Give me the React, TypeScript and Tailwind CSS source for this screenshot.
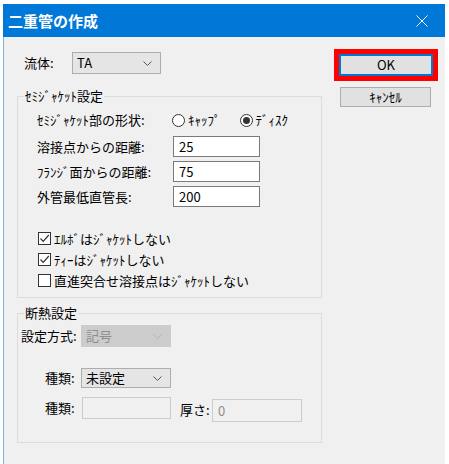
import React from 'react';

const font = { fontFamily: '"Noto Sans CJK JP", "Noto Sans", sans-serif' };

function Chevron({ disabled }: { disabled?: boolean }) {
  return (
    <svg width="9" height="5" viewBox="0 0 9 5" className="shrink-0">
      <path d="M0.5 0.5 L4.5 4.5 L8.5 0.5" fill="none" stroke={disabled ? '#b5b5b5' : '#555'} strokeWidth="1" />
    </svg>
  );
}

function Select({ value, w, h, disabled }: { value: string; w: string; h: string; disabled?: boolean }) {
  return (
    <div
      className={`${w} ${h} flex items-center justify-between pl-[4px] pr-[8px] border ${
        disabled ? 'border-[#cccccc] bg-[#cccccc] text-[#8e8e8e]' : 'border-[#adadad] bg-[#e5e5e5] text-black'
      }`}
    >
      <span>{value}</span>
      <Chevron disabled={disabled} />
    </div>
  );
}

function TextBox({ value, w, h, disabled }: { value: string; w: string; h: string; disabled?: boolean }) {
  return (
    <div
      className={`${w} ${h} flex items-center pl-[5px] border ${
        disabled ? 'border-[#cccccc] bg-[#f0f0f0] text-[#8e8e8e]' : 'border-[#7a7a7a] bg-white text-black'
      }`}
    >
      {value}
    </div>
  );
}

function Radio({ label, checked }: { label: string; checked?: boolean }) {
  return (
    <div className="flex items-center gap-[3px]">
      <span className="w-[13px] h-[13px] rounded-full border border-[#333] bg-white flex items-center justify-center">
        {checked && <span className="w-[7px] h-[7px] rounded-full bg-[#333]" />}
      </span>
      <span>{label}</span>
    </div>
  );
}

function Check({ label, checked }: { label: string; checked?: boolean }) {
  return (
    <div className="h-[21px] flex items-center pl-[20px] gap-[3px]">
      <span className="w-[13px] h-[13px] border border-[#333] bg-white flex items-center justify-center">
        {checked && (
          <svg width="11" height="11" viewBox="0 0 11 11">
            <path d="M1.5 5.5 L4.2 8.3 L9.8 2" fill="none" stroke="#333" strokeWidth="1.2" />
          </svg>
        )}
      </span>
      <span>{label}</span>
    </div>
  );
}

function Group({ title, h, children }: { title: string; h: string; children: React.ReactNode }) {
  return (
    <div className={`${h} border border-[#dcdcdc]`}>
      <div className="-mt-[9px] ml-[6px] px-[1px] w-fit bg-[#f0f0f0] leading-[16px]">{title}</div>
      {children}
    </div>
  );
}

export default function App() {
  return (
    <div className="min-h-screen bg-white text-[13px] leading-[16px] text-black" style={font}>
      <div className="ml-[3px] pt-[4px] w-[442px]">
        {/* title bar */}
        <div className="h-[33px] bg-[#0078d7] flex items-center justify-between pl-[5px] pr-[17px] text-white">
          <span className="text-[15px] font-bold">二重管の作成</span>
          <svg width="12" height="12" viewBox="0 0 12 12">
            <path d="M0.5 0.5 L11.5 11.5 M11.5 0.5 L0.5 11.5" stroke="#fff" strokeWidth="1" />
          </svg>
        </div>

        <div className="h-[427px] bg-[#f0f0f0] border-l border-[#7eb4ea] pl-[13px] flex">
          <div className="w-[305px]">
            <div className="mt-[15px] h-[22px] flex items-center pl-[7px]">
              <span className="w-[48px]">流体:</span>
              <Select value="TA" w="w-[89px]" h="h-[22px]" />
            </div>

            <div className="mt-[22px]">
              <Group title="ｾﾐｼﾞｬｹｯﾄ設定" h="h-[202px]">
                <div className="mt-[8px] flex items-center pl-[19px]">
                  <span className="w-[135px]">ｾﾐｼﾞｬｹｯﾄ部の形状:</span>
                  <div className="flex gap-[19px]">
                    <Radio label="ｷｬｯﾌﾟ" />
                    <Radio label="ﾃﾞｨｽｸ" checked />
                  </div>
                </div>
                <div className="mt-[8px] flex flex-col gap-[4px] pl-[19px]">
                  {[
                    ['溶接点からの距離:', '25'],
                    ['ﾌﾗﾝｼﾞ面からの距離:', '75'],
                    ['外管最低直管長:', '200'],
                  ].map(([label, value]) => (
                    <div key={label} className="flex items-center">
                      <span className="w-[136px]">{label}</span>
                      <TextBox value={value} w="w-[87px]" h="h-[21px]" />
                    </div>
                  ))}
                </div>
                <div className="mt-[21px]">
                  <Check label="ｴﾙﾎﾞはｼﾞｬｹｯﾄしない" checked />
                  <Check label="ﾃｨｰはｼﾞｬｹｯﾄしない" checked />
                  <Check label="直進突合せ溶接点はｼﾞｬｹｯﾄしない" />
                </div>
              </Group>
            </div>

            <div className="mt-[15px]">
              <Group title="断熱設定" h="h-[130px]">
                <div className="mt-[4px] flex items-center pl-[3px]">
                  <span className="w-[60px]">設定方式:</span>
                  <Select value="記号" w="w-[90px]" h="h-[22px]" disabled />
                </div>
                <div className="mt-[21px] flex items-center pl-[27px]">
                  <span className="w-[36px]">種類:</span>
                  <Select value="未設定" w="w-[90px]" h="h-[20px]" />
                </div>
                <div className="mt-[9px] flex items-start pl-[27px]">
                  <span className="w-[37px] h-[22px] flex items-center">種類:</span>
                  <TextBox value="" w="w-[89px]" h="h-[22px]" disabled />
                  <span className="ml-[9px] w-[32px] h-[25px] flex items-center">厚さ:</span>
                  <div className="mt-[2px]">
                    <TextBox value="0" w="w-[90px]" h="h-[23px]" disabled />
                  </div>
                </div>
              </Group>
            </div>
          </div>

          {/* buttons */}
          <div className="ml-[12px] pt-[12px] w-[104px]">
            <div className="border-[5px] border-[#ff0000]">
              <button className="w-full h-[22px] border-2 border-[#0078d7] bg-[#e1e1e1] flex items-center justify-center">
                OK
              </button>
            </div>
            <button className="mt-[6px] ml-[6px] w-[91px] h-[20px] border border-[#adadad] bg-[#e1e1e1] flex items-center justify-center">
              ｷｬﾝｾﾙ
            </button>
          </div>
        </div>
      </div>
    </div>
  );
}
